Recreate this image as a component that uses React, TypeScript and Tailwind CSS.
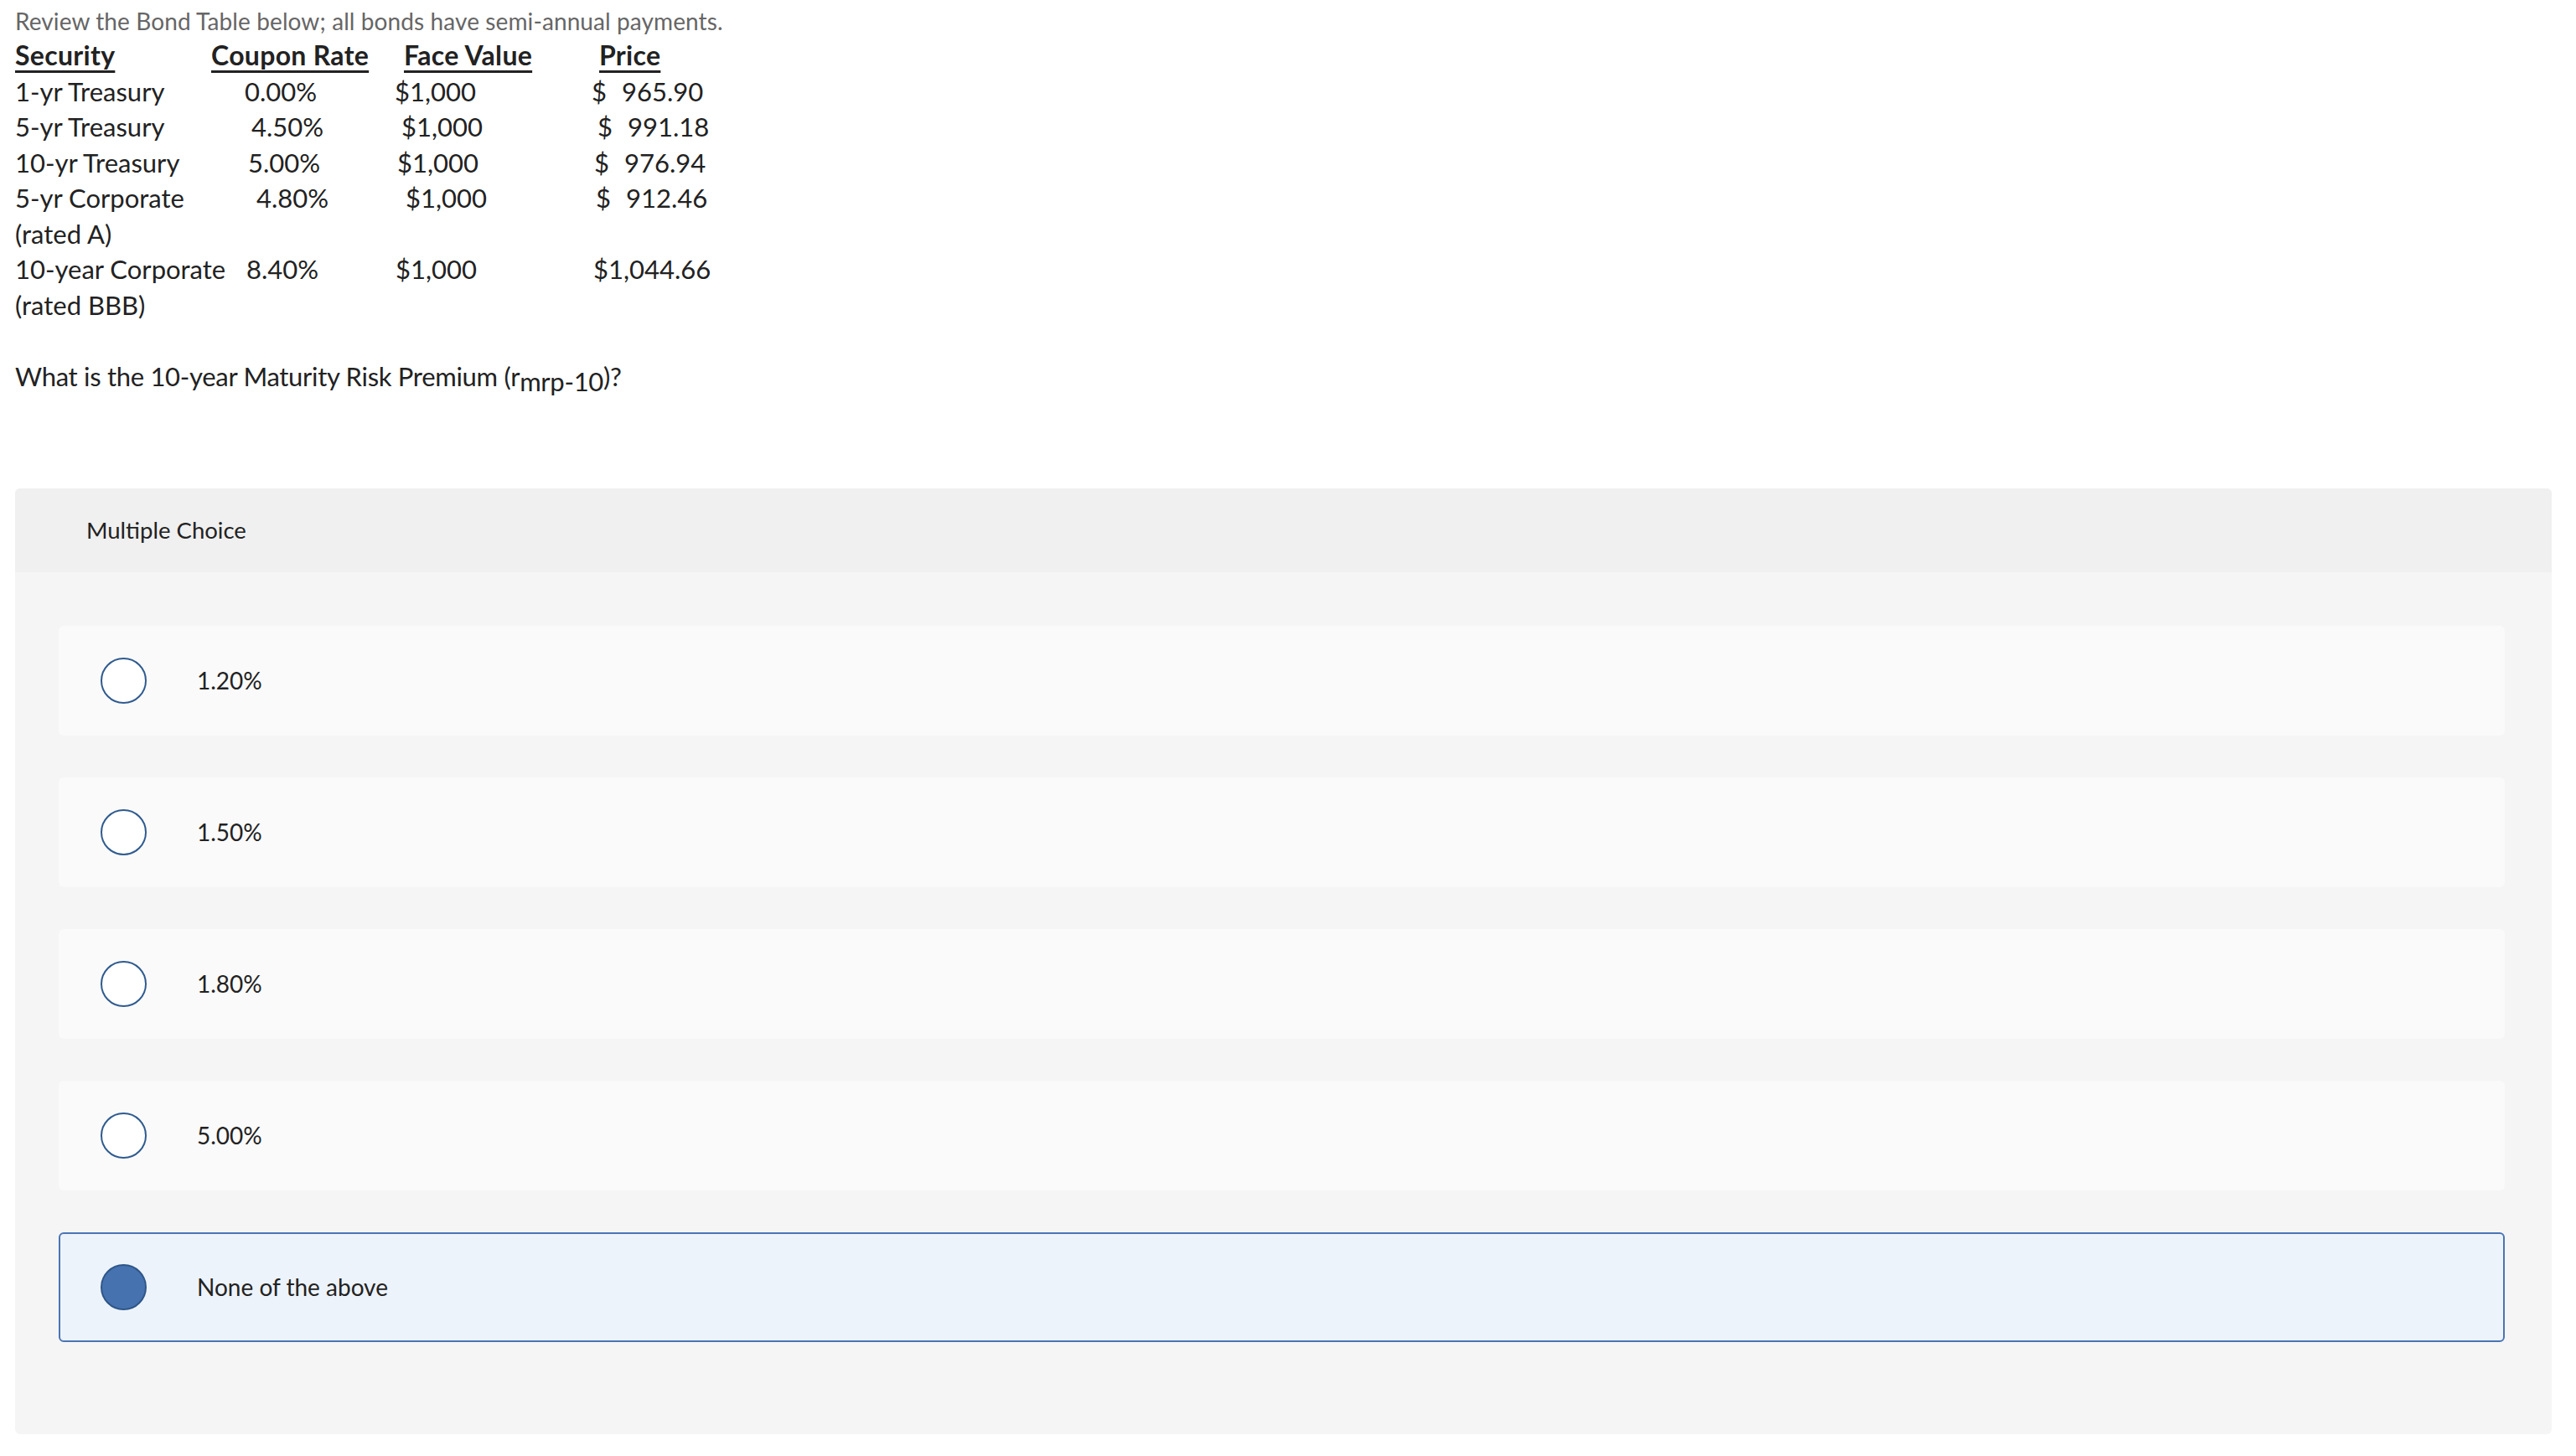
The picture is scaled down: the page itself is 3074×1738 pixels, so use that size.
const bonds = [
  { name: ["1-yr Treasury"], rate: "0.00%", ratePad: "pl-[40px]", face: "pl-[1px]", pricePad: "pl-[1px]", price: "965.90", dollar: true },
  { name: ["5-yr Treasury"], rate: "4.50%", ratePad: "pl-[48px]", face: "pl-[9px]", pricePad: "pl-[8px]", price: "991.18", dollar: true },
  { name: ["10-yr Treasury"], rate: "5.00%", ratePad: "pl-[44px]", face: "pl-[4px]", pricePad: "pl-[4px]", price: "976.94", dollar: true },
  { name: ["5-yr Corporate", "(rated A)"], rate: "4.80%", ratePad: "pl-[54px]", face: "pl-[14px]", pricePad: "pl-[6px]", price: "912.46", dollar: true },
  { name: ["10-year Corporate", "(rated BBB)"], rate: "8.40%", ratePad: "pl-[42px]", face: "pl-[2px]", pricePad: "pl-[3px]", price: "$1,044.66", dollar: false },
];

const choices = ["1.20%", "1.50%", "1.80%", "5.00%", "None of the above"];

function Radio({ checked }: { checked: boolean }) {
  return checked ? (
    <span className="block h-[55px] w-[55px] shrink-0 rounded-full border-2 border-[#2e5688] bg-[#4672b0]" />
  ) : (
    <span className="block h-[55px] w-[55px] shrink-0 rounded-full border-2 border-[#2f5b8f] bg-white" />
  );
}

export default function App() {
  const selected = 4;

  return (
    <div className="min-h-[1738px] w-[3074px] bg-white font-['Lato',sans-serif] text-[#222]">
      <div className="pl-[18px] pt-[5px]">
        <p className="text-[28px] leading-[40px] tracking-[0.1px] text-[#666]">
          Review the Bond Table below; all bonds have semi-annual payments.
        </p>

        <div className="grid grid-cols-[234px_218px_235px_auto] text-[31px] leading-[42.5px]">
          <div className="text-[32px] font-bold tracking-[0.3px] underline decoration-[3px] underline-offset-[6px]">Security</div>
          <div className="text-[32px] font-bold tracking-[0.3px] underline decoration-[3px] underline-offset-[6px]">Coupon Rate</div>
          <div className="pl-[12px] text-[32px] font-bold tracking-[0.3px] underline decoration-[3px] underline-offset-[6px]">
            Face Value
          </div>
          <div className="pl-[10px] text-[32px] font-bold tracking-[0.3px] underline decoration-[3px] underline-offset-[6px]">
            Price
          </div>

          {bonds.map((b) => (
            <div key={b.name[0]} className="contents">
              <div>
                {b.name.map((line) => (
                  <div key={line} className="whitespace-nowrap">
                    {line}
                  </div>
                ))}
              </div>
              <div className={b.ratePad}>{b.rate}</div>
              <div className={b.face}>$1,000</div>
              <div className={b.pricePad}>
                {b.dollar ? (
                  <span className="flex">
                    <span className="w-[36px]">$</span>
                    <span>{b.price}</span>
                  </span>
                ) : (
                  b.price
                )}
              </div>
            </div>
          ))}
        </div>

        <p className="mt-[43px] text-[31px] leading-[42.5px] tracking-[-0.3px]">
          What is the 10-year Maturity Risk Premium (r
          <sub className="relative top-[6px] align-baseline text-[31px]">mrp-10</sub>
          )?
        </p>
      </div>

      <div className="ml-[18px] mt-[112px] w-[3027px] overflow-hidden rounded-[6px] bg-[#f5f5f5]">
        <div className="flex h-[100px] items-center bg-[#f0f0f0] pl-[85px] text-[27.5px]">Multiple Choice</div>

        <div className="flex flex-col gap-[50px] pb-[110px] pl-[52px] pt-[64px]">
          {choices.map((c, i) =>
            i === selected ? (
              <div
                key={c}
                className="flex h-[131px] w-[2919px] items-center rounded-[6px] border-2 border-[#4a75b5] bg-[#edf3fa] pl-[48px] text-[28px]"
              >
                <Radio checked />
                <span className="pl-[60px]">{c}</span>
              </div>
            ) : (
              <div key={c} className="flex h-[131px] w-[2919px] items-center rounded-[6px] bg-[#fafafa] pl-[50px] text-[28px]">
                <Radio checked={false} />
                <span className="pl-[60px]">{c}</span>
              </div>
            ),
          )}
        </div>
      </div>
    </div>
  );
}
